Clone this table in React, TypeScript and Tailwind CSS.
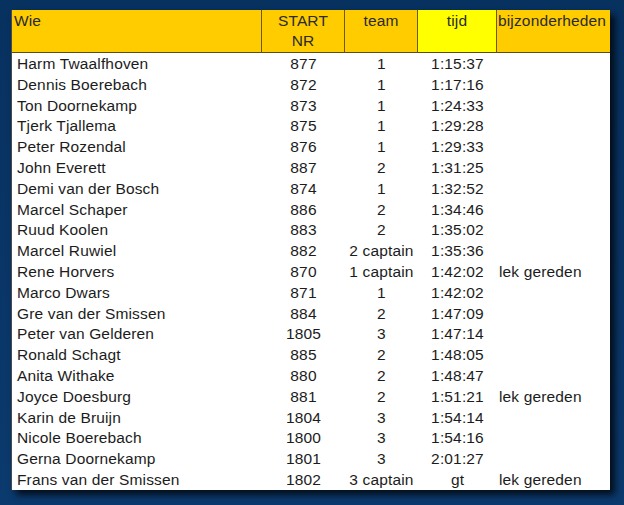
const rows: [string, string, string, string, string][] = [
  ['Harm Twaalfhoven', '877', '1', '1:15:37', ''],
  ['Dennis Boerebach', '872', '1', '1:17:16', ''],
  ['Ton Doornekamp', '873', '1', '1:24:33', ''],
  ['Tjerk Tjallema', '875', '1', '1:29:28', ''],
  ['Peter Rozendal', '876', '1', '1:29:33', ''],
  ['John Everett', '887', '2', '1:31:25', ''],
  ['Demi van der Bosch', '874', '1', '1:32:52', ''],
  ['Marcel Schaper', '886', '2', '1:34:46', ''],
  ['Ruud Koolen', '883', '2', '1:35:02', ''],
  ['Marcel Ruwiel', '882', '2 captain', '1:35:36', ''],
  ['Rene Horvers', '870', '1 captain', '1:42:02', 'lek gereden'],
  ['Marco Dwars', '871', '1', '1:42:02', ''],
  ['Gre van der Smissen', '884', '2', '1:47:09', ''],
  ['Peter van Gelderen', '1805', '3', '1:47:14', ''],
  ['Ronald Schagt', '885', '2', '1:48:05', ''],
  ['Anita Withake', '880', '2', '1:48:47', ''],
  ['Joyce Doesburg', '881', '2', '1:51:21', 'lek gereden'],
  ['Karin de Bruijn', '1804', '3', '1:54:14', ''],
  ['Nicole Boerebach', '1800', '3', '1:54:16', ''],
  ['Gerna Doornekamp', '1801', '3', '2:01:27', ''],
  ['Frans van der Smissen', '1802', '3 captain', 'gt', 'lek gereden'],
]

const cols = 'grid grid-cols-[250px_83px_73px_79px_113px]'

export default function App() {
  return (
    <div className="w-[624px] h-[505px] bg-gradient-to-b from-[#07315f] to-[#0b3a6e] pt-[10px] pl-[11px]">
      <div className="w-[599px] h-[480px] bg-white border-l border-[#4a4a4a] shadow-[5px_5px_7px_rgba(0,0,0,0.75)] font-['Liberation_Sans',Arial,sans-serif] text-[15.5px] tracking-[0.15px] text-[#1c1c1c]">
        {/* header */}
        <div className={`${cols} h-[43px] bg-[#ffcc00] border-b border-[#5c4d12] leading-[20px] text-[#2a2a2a]`}>
          <div className="pl-[2px] pt-[1px] border-r border-[#6b5a1a]">Wie</div>
          <div className="text-center pt-[1px] border-r border-[#6b5a1a]">
            START
            <br />
            NR
          </div>
          <div className="text-center pt-[1px] border-r border-[#6b5a1a]">team</div>
          <div className="text-center pt-[1px] bg-[#ffff00] border-r border-[#6b5a1a]">tijd</div>
          <div className="pl-[1px] pt-[1px] whitespace-nowrap">bijzonderheden</div>
        </div>

        {/* body */}
        <div>
          {rows.map((r, i) => (
            <div key={i} className={`${cols} h-[20.8px] leading-[21px] whitespace-nowrap`}>
              <div className="pl-[5px]">{r[0]}</div>
              <div className="text-center">{r[1]}</div>
              <div className="text-center">{r[2]}</div>
              <div className="text-center">{r[3]}</div>
              <div className="pl-[2px]">{r[4]}</div>
            </div>
          ))}
        </div>
      </div>
    </div>
  )
}
